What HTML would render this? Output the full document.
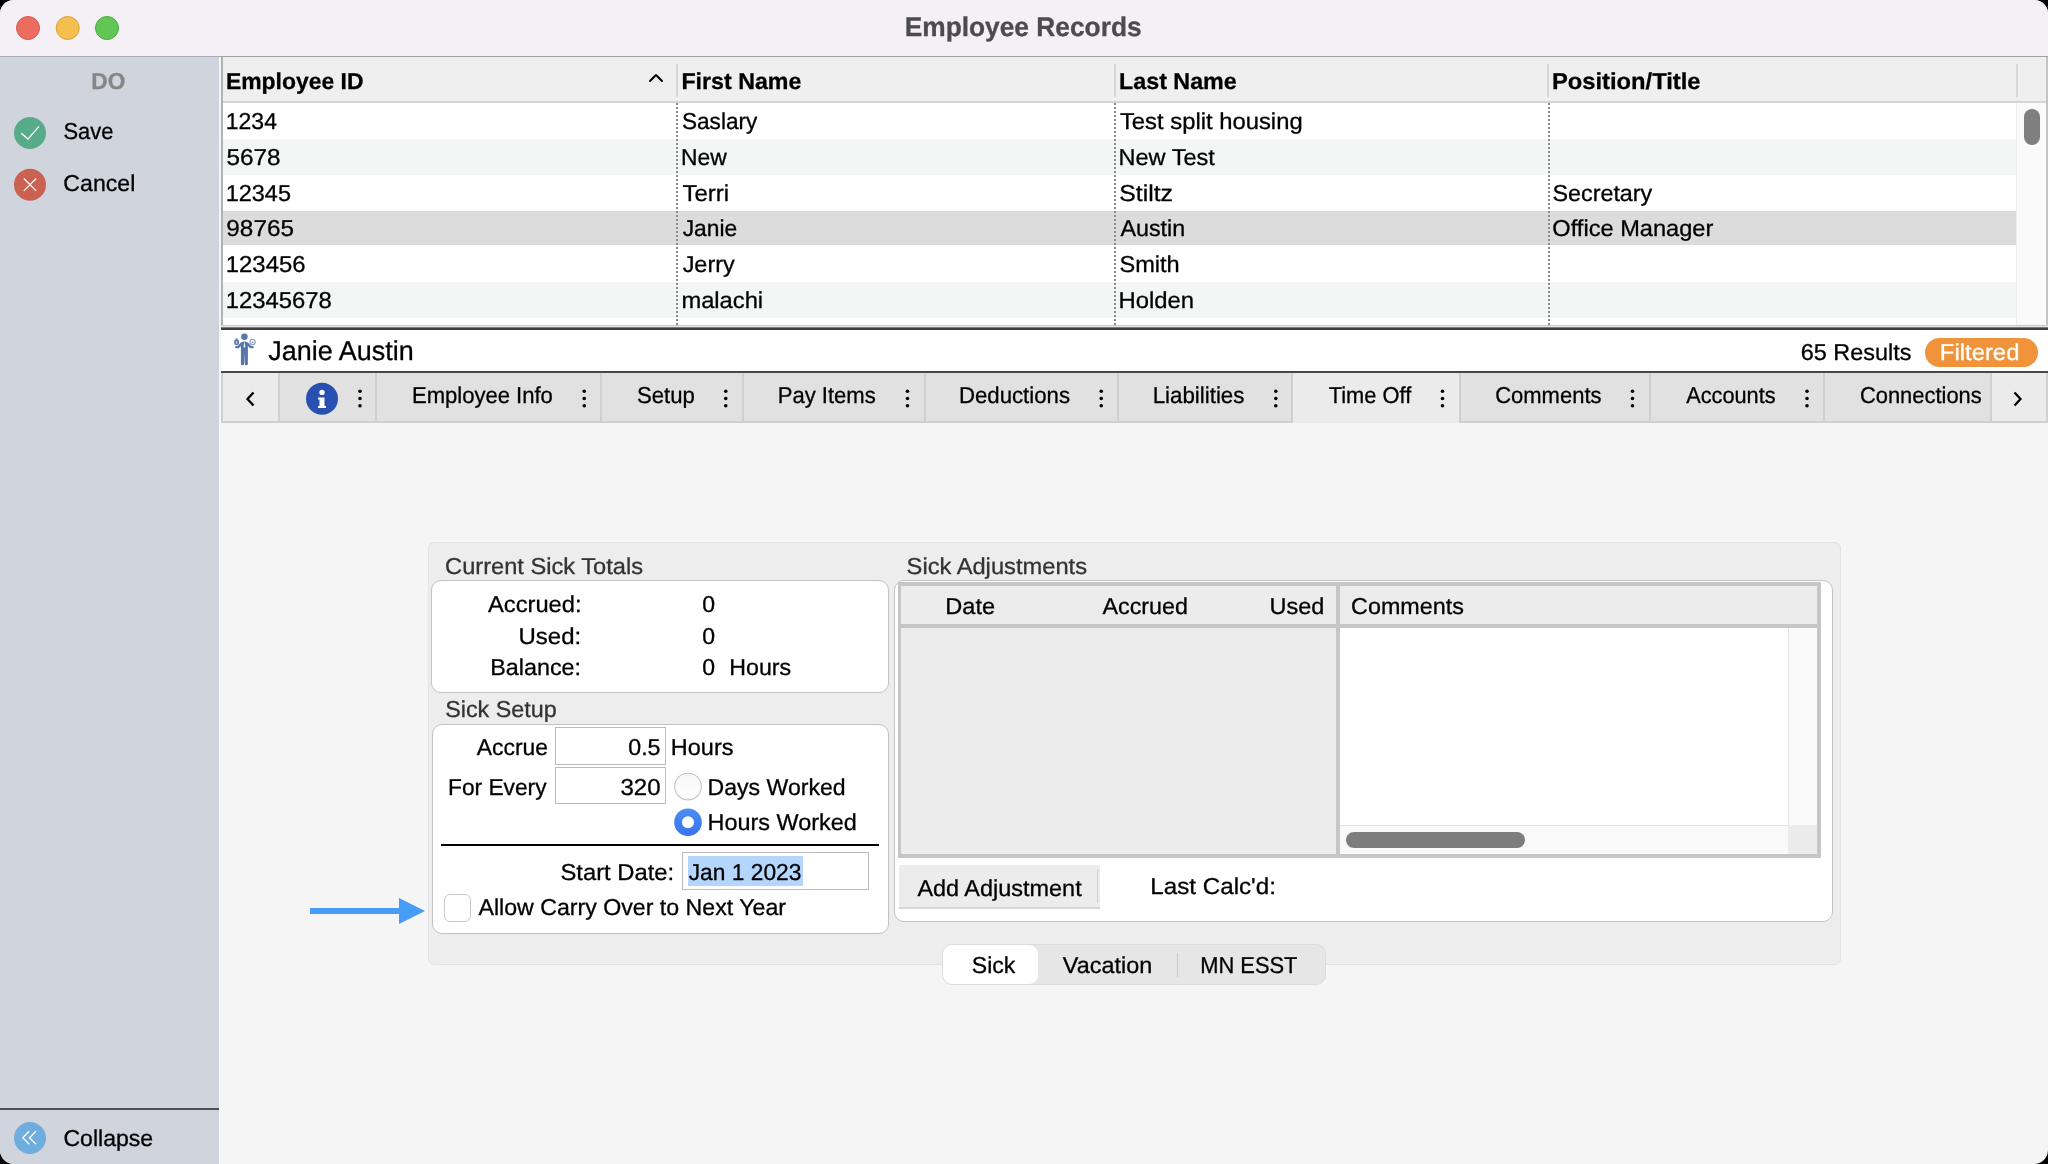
<!DOCTYPE html><html><head><meta charset="utf-8"><style>
html,body{margin:0;padding:0;width:2048px;height:1164px;overflow:hidden;background:#000}
#w{position:absolute;left:0;top:0;width:2048px;height:1164px;overflow:hidden;border-radius:14px;background:#f5f5f5}
#w div{position:absolute;box-sizing:border-box}
svg{position:absolute;left:0;top:0;will-change:transform;text-rendering:geometricPrecision}
text{font-family:"Liberation Sans",sans-serif;white-space:pre}
</style></head><body><div id="w">

<div style="left:0px;top:0px;width:2048px;height:56px;background:#f4f0f6"></div>
<div style="left:0px;top:56px;width:219px;height:1px;background:#a6adb8"></div>
<div style="left:219px;top:56px;width:1829px;height:1px;background:#a2a2a2"></div>
<div style="left:0px;top:57px;width:219px;height:1px;background:#c3c8d1"></div>
<div style="left:0px;top:57px;width:219px;height:1107px;background:#d0d4dc"></div>
<div style="left:219px;top:57px;width:2px;height:1107px;background:#f5f5f5"></div>
<div style="left:0px;top:1108px;width:219px;height:2px;background:#4f4f4f"></div>
<div style="left:221px;top:57px;width:2px;height:270px;background:#b2b2b2"></div>
<div style="left:223px;top:57px;width:1825px;height:44px;background:#efefef"></div>
<div style="left:223px;top:101px;width:1825px;height:2px;background:#d4d4d4"></div>
<div style="left:676px;top:64px;width:2px;height:33px;background:#d7d7d7"></div>
<div style="left:1113.5px;top:64px;width:2.0px;height:33px;background:#d7d7d7"></div>
<div style="left:1547px;top:64px;width:2px;height:33px;background:#d7d7d7"></div>
<div style="left:2016px;top:64px;width:2px;height:33px;background:#d7d7d7"></div>
<div style="left:223px;top:103px;width:1793px;height:36px;background:#ffffff"></div>
<div style="left:223px;top:139px;width:1793px;height:36px;background:#f4f5f5"></div>
<div style="left:223px;top:175px;width:1793px;height:36px;background:#ffffff"></div>
<div style="left:223px;top:211px;width:1793px;height:33.5px;background:#dcdcdc"></div>
<div style="left:223px;top:244.5px;width:1793px;height:37.5px;background:#ffffff"></div>
<div style="left:223px;top:282px;width:1793px;height:36px;background:#f4f5f5"></div>
<div style="left:223px;top:318px;width:1793px;height:9px;background:#ffffff"></div>
<div style="left:2016px;top:103px;width:30px;height:224px;background:#fafafa;border-left:1px solid #ebebeb"></div>
<div style="left:2023.5px;top:109px;width:16.5px;height:35.5px;background:#7f7f7f;border-radius:9px"></div>
<div style="left:2046px;top:57px;width:2px;height:270px;background:#c4c4c4"></div>
<div style="left:676px;top:103px;width:2px;height:222px;background:repeating-linear-gradient(to bottom,#8a8a8a 0,#8a8a8a 2px,transparent 2px,transparent 4px)"></div>
<div style="left:1113.5px;top:103px;width:2.0px;height:222px;background:repeating-linear-gradient(to bottom,#8a8a8a 0,#8a8a8a 2px,transparent 2px,transparent 4px)"></div>
<div style="left:1547.5px;top:103px;width:2.0px;height:222px;background:repeating-linear-gradient(to bottom,#8a8a8a 0,#8a8a8a 2px,transparent 2px,transparent 4px)"></div>
<div style="left:221px;top:325px;width:1827px;height:1px;background:#c8c8c8"></div>
<div style="left:221px;top:326px;width:1827px;height:1px;background:#e8e8e8"></div>
<div style="left:221px;top:327px;width:1827px;height:1px;background:#7a7a7a"></div>
<div style="left:221px;top:328px;width:1827px;height:2px;background:#404040"></div>
<div style="left:221px;top:330px;width:1827px;height:41px;background:#ffffff"></div>
<div style="left:1924.7px;top:338px;width:113.29999999999995px;height:29.19999999999999px;background:#f0933a;border-radius:15px"></div>
<div style="left:221px;top:371px;width:1827px;height:2px;background:#474747"></div>
<div style="left:221px;top:373px;width:1827px;height:50px;background:#e1e1e1;border-top:0;border-bottom:2px solid #cfcfcf"></div>
<div style="left:221px;top:373px;width:2px;height:50px;background:#cfcfcf"></div>
<div style="left:223px;top:373px;width:55px;height:48px;background:#ebebeb"></div>
<div style="left:1292px;top:373px;width:166.5px;height:50px;background:#ebebeb"></div>
<div style="left:1991px;top:373px;width:55px;height:48px;background:#ebebeb"></div>
<div style="left:278px;top:373px;width:2px;height:48px;background:#d0d0d0"></div>
<div style="left:374.5px;top:373px;width:2.0px;height:48px;background:#d0d0d0"></div>
<div style="left:599.5px;top:373px;width:2.0px;height:48px;background:#d0d0d0"></div>
<div style="left:741.5px;top:373px;width:2.0px;height:48px;background:#d0d0d0"></div>
<div style="left:923.5px;top:373px;width:2.0px;height:48px;background:#d0d0d0"></div>
<div style="left:1116.5px;top:373px;width:2.0px;height:48px;background:#d0d0d0"></div>
<div style="left:1290.5px;top:373px;width:2.0px;height:50px;background:#d0d0d0"></div>
<div style="left:1458.5px;top:373px;width:2.0px;height:50px;background:#d0d0d0"></div>
<div style="left:1648.5px;top:373px;width:2.0px;height:48px;background:#d0d0d0"></div>
<div style="left:1822.5px;top:373px;width:2.0px;height:48px;background:#d0d0d0"></div>
<div style="left:1989.5px;top:373px;width:2.0px;height:48px;background:#d0d0d0"></div>
<div style="left:2046px;top:373px;width:2px;height:48px;background:#d0d0d0"></div>
<div style="left:427.5px;top:542px;width:1413.0px;height:422.5px;background:#ededed;border:1px solid #e3e3e3;border-radius:6px"></div>
<div style="left:431px;top:580px;width:458px;height:113px;background:#fff;border:1.5px solid #c3c3c3;border-radius:10px"></div>
<div style="left:432px;top:723.5px;width:457px;height:210.0px;background:#fff;border:1.5px solid #c3c3c3;border-radius:10px"></div>
<div style="left:893.5px;top:580px;width:939.5px;height:341.5px;background:#fff;border:1.5px solid #c3c3c3;border-radius:10px"></div>
<div style="left:555px;top:727px;width:111px;height:37.5px;background:#fff;border:1.5px solid #bcbcbc"></div>
<div style="left:555px;top:767px;width:111px;height:37px;background:#fff;border:1.5px solid #bcbcbc"></div>
<div style="left:682px;top:852px;width:187px;height:38px;background:#fff;border:1.5px solid #bcbcbc"></div>
<div style="left:688px;top:856px;width:115px;height:29.5px;background:#b4d6fd"></div>
<div style="left:441px;top:844px;width:438px;height:2px;background:#000"></div>
<div style="left:443.7px;top:894.3px;width:27.30000000000001px;height:27.40000000000009px;background:#fff;border:1.2px solid #c9c9c9;border-radius:6px"></div>
<div style="left:310px;top:908px;width:90px;height:6px;background:#479cf6"></div>
<div style="left:897.5px;top:582px;width:923.5px;height:275.5px;background:#c6c6c6"></div>
<div style="left:901px;top:585.5px;width:916px;height:38.5px;background:#ececec"></div>
<div style="left:901px;top:628px;width:435px;height:226px;background:#ececec"></div>
<div style="left:1340px;top:628px;width:477px;height:226px;background:#ffffff"></div>
<div style="left:1336px;top:585.5px;width:4px;height:268.5px;background:#c6c6c6"></div>
<div style="left:1788px;top:628px;width:29px;height:197px;background:#fafafa;border-left:1.5px solid #e3e3e3"></div>
<div style="left:1340px;top:825px;width:448px;height:29px;background:#f9f9f9;border-top:1px solid #e3e3e3"></div>
<div style="left:1788px;top:825px;width:29px;height:29px;background:#ebebeb"></div>
<div style="left:1346.3px;top:832px;width:178.70000000000005px;height:16px;background:#7d7d7d;border-radius:8px"></div>
<div style="left:899px;top:864.5px;width:201px;height:44.5px;background:#ececec;border-bottom:2px solid #d6d6d6"></div>
<div style="left:1096.5px;top:870px;width:1.5px;height:33px;background:#d2d2d2"></div>
<div style="left:942px;top:944px;width:384px;height:41px;background:#e6e6e6;border:1px solid #dcdcdc;border-radius:10px"></div>
<div style="left:943px;top:945px;width:95px;height:39px;background:#ffffff;border-radius:9px"></div>
<div style="left:1176.5px;top:953px;width:1.5px;height:24px;background:#c9c9c9"></div>
<svg width="2048" height="1164" viewBox="0 0 2048 1164">
<circle cx="28" cy="28" r="11.5" fill="#ee6b5f" stroke="#d65a4d" stroke-width="1"/>
<circle cx="67.7" cy="28" r="11.5" fill="#f4bf4f" stroke="#d9a23a" stroke-width="1"/>
<circle cx="107" cy="28" r="11.5" fill="#62c655" stroke="#4ca83e" stroke-width="1"/>
<circle cx="30" cy="133" r="16" fill="#58ab8a"/>
<polyline points="21.2,133.2 28,139 39,126.3" fill="none" stroke="#fff" stroke-width="1.25"/>
<circle cx="30" cy="184.7" r="16" fill="#cb6150"/>
<path d="M23.8 178.5 L36.2 190.9 M36.2 178.5 L23.8 190.9" stroke="#fff" stroke-width="1.25"/>
<circle cx="30" cy="1138" r="16" fill="#6fadde"/>
<path d="M29.3 1131.2 L22.8 1137.7 L29.3 1144.2 M36 1131.2 L29.5 1137.7 L36 1144.2" fill="none" stroke="#fff" stroke-width="1.3"/>
<polyline points="650,81 656,75 662,81" fill="none" stroke="#000" stroke-width="2" stroke-linecap="round" stroke-linejoin="round"/>
<g fill="#5877a9"><circle cx="244.4" cy="336.8" r="3.25"/><path d="M240.8 342.6 Q244.4 340.4 248 342.6 L251.2 346.1 L253.2 346.1 Q254.4 347.1 253.2 348.3 L250.4 348.3 L247.9 346.3 L247.9 364 Q247.9 365.2 246.7 365.2 L245.8 365.2 Q244.8 365.2 244.7 364 L244.4 352.5 L244.1 364 Q244 365.2 243 365.2 L242.1 365.2 Q240.9 365.2 240.9 364 L240.9 346.3 L238.4 348.3 L235.6 348.3 Q234.4 347.1 235.6 346.1 L237.6 346.1 Z"/><ellipse cx="236.6" cy="342.2" rx="2.5" ry="2.9"/><path d="M235.2 338.4 L238 338.4 L237.2 339.8 L236 339.8 Z"/><ellipse cx="236.6" cy="342.3" rx="0.8" ry="1.6" fill="#b9c6dd"/><circle cx="252.6" cy="341.9" r="2.6" fill="none" stroke="#8499c0" stroke-width="1.1"/><circle cx="252.6" cy="342.2" r="0.9" fill="#8499c0"/></g><path d="M244.4 341.3 L243.6 346.5 L244.4 347.8 L245.2 346.5 Z" fill="#fff"/>
<polyline points="253.5,392.5 247.5,399 253.5,405.5" fill="none" stroke="#000" stroke-width="2.3"/>
<polyline points="2014.5,392.5 2020.5,399 2014.5,405.5" fill="none" stroke="#000" stroke-width="2.3"/>
<circle cx="322" cy="398.8" r="16" fill="#2850b0"/><circle cx="322" cy="392.4" r="2.7" fill="#fff"/><path d="M318 397.5 L324.5 397.5 L324.5 406 L326 406 L326 408 L318 408 L318 406 L319.5 406 L319.5 399.5 L318 399.5 Z" fill="#fff"/>
<circle cx="360" cy="391.3" r="1.8" fill="#000"/>
<circle cx="360" cy="398.5" r="1.8" fill="#000"/>
<circle cx="360" cy="405.7" r="1.8" fill="#000"/>
<circle cx="584.25" cy="391.3" r="1.8" fill="#000"/>
<circle cx="584.25" cy="398.5" r="1.8" fill="#000"/>
<circle cx="584.25" cy="405.7" r="1.8" fill="#000"/>
<circle cx="725.75" cy="391.3" r="1.8" fill="#000"/>
<circle cx="725.75" cy="398.5" r="1.8" fill="#000"/>
<circle cx="725.75" cy="405.7" r="1.8" fill="#000"/>
<circle cx="907.5" cy="391.3" r="1.8" fill="#000"/>
<circle cx="907.5" cy="398.5" r="1.8" fill="#000"/>
<circle cx="907.5" cy="405.7" r="1.8" fill="#000"/>
<circle cx="1101.25" cy="391.3" r="1.8" fill="#000"/>
<circle cx="1101.25" cy="398.5" r="1.8" fill="#000"/>
<circle cx="1101.25" cy="405.7" r="1.8" fill="#000"/>
<circle cx="1275.8" cy="391.3" r="1.8" fill="#000"/>
<circle cx="1275.8" cy="398.5" r="1.8" fill="#000"/>
<circle cx="1275.8" cy="405.7" r="1.8" fill="#000"/>
<circle cx="1442.5" cy="391.3" r="1.8" fill="#000"/>
<circle cx="1442.5" cy="398.5" r="1.8" fill="#000"/>
<circle cx="1442.5" cy="405.7" r="1.8" fill="#000"/>
<circle cx="1632.5" cy="391.3" r="1.8" fill="#000"/>
<circle cx="1632.5" cy="398.5" r="1.8" fill="#000"/>
<circle cx="1632.5" cy="405.7" r="1.8" fill="#000"/>
<circle cx="1807" cy="391.3" r="1.8" fill="#000"/>
<circle cx="1807" cy="398.5" r="1.8" fill="#000"/>
<circle cx="1807" cy="405.7" r="1.8" fill="#000"/>
<defs><linearGradient id="rg" x1="0" y1="0" x2="0" y2="1"><stop offset="0" stop-color="#4a8ef2"/><stop offset="1" stop-color="#3a73ef"/></linearGradient><linearGradient id="ug" x1="0" y1="0" x2="0" y2="1"><stop offset="0" stop-color="#f7f7f7"/><stop offset="1" stop-color="#ffffff"/></linearGradient></defs>
<circle cx="688" cy="786.6" r="13.3" fill="url(#ug)" stroke="#c4c4c4" stroke-width="1.1"/>
<circle cx="688" cy="822.2" r="13.8" fill="url(#rg)"/><circle cx="688" cy="822.2" r="6" fill="#fff"/>
<polygon points="399,898 425,911 399,924" fill="#479cf6"/>
<text x="904.72" y="36.00" font-size="26.9" font-weight="bold" fill="#4c4b50" stroke="#4c4b50" stroke-width="0.3" textLength="236.86" lengthAdjust="spacingAndGlyphs">Employee Records</text>
<text x="91.27" y="89.00" font-size="23" font-weight="bold" fill="#868686" stroke="#868686" stroke-width="0.3" textLength="33.99" lengthAdjust="spacingAndGlyphs">DO</text>
<text x="63.51" y="138.75" font-size="23" font-weight="normal" fill="#000" stroke="#000" stroke-width="0.3" textLength="49.96" lengthAdjust="spacingAndGlyphs">Save</text>
<text x="63.34" y="191.25" font-size="23" font-weight="normal" fill="#000" stroke="#000" stroke-width="0.3" textLength="71.98" lengthAdjust="spacingAndGlyphs">Cancel</text>
<text x="63.45" y="1145.80" font-size="23" font-weight="normal" fill="#000" stroke="#000" stroke-width="0.3" textLength="89.76" lengthAdjust="spacingAndGlyphs">Collapse</text>
<text x="225.95" y="89.20" font-size="23" font-weight="bold" fill="#000" stroke="#000" stroke-width="0.3" textLength="137.51" lengthAdjust="spacingAndGlyphs">Employee ID</text>
<text x="681.43" y="89.20" font-size="23" font-weight="bold" fill="#000" stroke="#000" stroke-width="0.3" textLength="119.95" lengthAdjust="spacingAndGlyphs">First Name</text>
<text x="1119.03" y="89.20" font-size="23" font-weight="bold" fill="#000" stroke="#000" stroke-width="0.3" textLength="117.73" lengthAdjust="spacingAndGlyphs">Last Name</text>
<text x="1551.90" y="89.20" font-size="23" font-weight="bold" fill="#000" stroke="#000" stroke-width="0.3" textLength="148.62" lengthAdjust="spacingAndGlyphs">Position/Title</text>
<text x="225.78" y="129.00" font-size="23" font-weight="normal" fill="#000" stroke="#000" stroke-width="0.3" textLength="51.16" lengthAdjust="spacingAndGlyphs">1234</text>
<text x="681.98" y="129.00" font-size="23" font-weight="normal" fill="#000" stroke="#000" stroke-width="0.3" textLength="75.36" lengthAdjust="spacingAndGlyphs">Saslary</text>
<text x="1119.96" y="129.00" font-size="23" font-weight="normal" fill="#000" stroke="#000" stroke-width="0.3" textLength="182.70" lengthAdjust="spacingAndGlyphs">Test split housing</text>
<text x="226.53" y="164.70" font-size="23" font-weight="normal" fill="#000" stroke="#000" stroke-width="0.3" textLength="54.06" lengthAdjust="spacingAndGlyphs">5678</text>
<text x="681.11" y="164.70" font-size="23" font-weight="normal" fill="#000" stroke="#000" stroke-width="0.3" textLength="45.74" lengthAdjust="spacingAndGlyphs">New</text>
<text x="1118.56" y="164.70" font-size="23" font-weight="normal" fill="#000" stroke="#000" stroke-width="0.3" textLength="96.25" lengthAdjust="spacingAndGlyphs">New Test</text>
<text x="225.74" y="200.60" font-size="23" font-weight="normal" fill="#000" stroke="#000" stroke-width="0.3" textLength="65.22" lengthAdjust="spacingAndGlyphs">12345</text>
<text x="682.46" y="200.60" font-size="23" font-weight="normal" fill="#000" stroke="#000" stroke-width="0.3" textLength="46.64" lengthAdjust="spacingAndGlyphs">Terri</text>
<text x="1119.39" y="200.60" font-size="23" font-weight="normal" fill="#000" stroke="#000" stroke-width="0.3" textLength="53.54" lengthAdjust="spacingAndGlyphs">Stiltz</text>
<text x="226.34" y="236.30" font-size="23" font-weight="normal" fill="#000" stroke="#000" stroke-width="0.3" textLength="67.65" lengthAdjust="spacingAndGlyphs">98765</text>
<text x="682.66" y="236.30" font-size="23" font-weight="normal" fill="#000" stroke="#000" stroke-width="0.3" textLength="54.58" lengthAdjust="spacingAndGlyphs">Janie</text>
<text x="1120.44" y="236.30" font-size="23" font-weight="normal" fill="#000" stroke="#000" stroke-width="0.3" textLength="64.76" lengthAdjust="spacingAndGlyphs">Austin</text>
<text x="225.71" y="272.10" font-size="23" font-weight="normal" fill="#000" stroke="#000" stroke-width="0.3" textLength="79.86" lengthAdjust="spacingAndGlyphs">123456</text>
<text x="682.65" y="272.10" font-size="23" font-weight="normal" fill="#000" stroke="#000" stroke-width="0.3" textLength="52.15" lengthAdjust="spacingAndGlyphs">Jerry</text>
<text x="1119.44" y="272.10" font-size="23" font-weight="normal" fill="#000" stroke="#000" stroke-width="0.3" textLength="60.26" lengthAdjust="spacingAndGlyphs">Smith</text>
<text x="225.71" y="307.70" font-size="23" font-weight="normal" fill="#000" stroke="#000" stroke-width="0.3" textLength="106.10" lengthAdjust="spacingAndGlyphs">12345678</text>
<text x="681.40" y="307.70" font-size="23" font-weight="normal" fill="#000" stroke="#000" stroke-width="0.3" textLength="81.72" lengthAdjust="spacingAndGlyphs">malachi</text>
<text x="1118.53" y="307.70" font-size="23" font-weight="normal" fill="#000" stroke="#000" stroke-width="0.3" textLength="75.60" lengthAdjust="spacingAndGlyphs">Holden</text>
<text x="1552.45" y="200.60" font-size="23" font-weight="normal" fill="#000" stroke="#000" stroke-width="0.3" textLength="99.84" lengthAdjust="spacingAndGlyphs">Secretary</text>
<text x="1552.38" y="236.30" font-size="23" font-weight="normal" fill="#000" stroke="#000" stroke-width="0.3" textLength="161.00" lengthAdjust="spacingAndGlyphs">Office Manager</text>
<text x="268.35" y="360.00" font-size="27.3" font-weight="normal" fill="#000" stroke="#000" stroke-width="0.3" textLength="145.35" lengthAdjust="spacingAndGlyphs">Janie Austin</text>
<text x="1800.83" y="359.80" font-size="23" font-weight="normal" fill="#000" stroke="#000" stroke-width="0.3" textLength="110.58" lengthAdjust="spacingAndGlyphs">65 Results</text>
<text x="1939.83" y="359.80" font-size="23" font-weight="normal" fill="#ffffff" stroke="#ffffff" stroke-width="0.3" textLength="79.61" lengthAdjust="spacingAndGlyphs">Filtered</text>
<text x="411.93" y="403.00" font-size="23" font-weight="normal" fill="#000" stroke="#000" stroke-width="0.3" textLength="140.96" lengthAdjust="spacingAndGlyphs">Employee Info</text>
<text x="637.00" y="403.00" font-size="23" font-weight="normal" fill="#000" stroke="#000" stroke-width="0.3" textLength="57.90" lengthAdjust="spacingAndGlyphs">Setup</text>
<text x="777.68" y="403.00" font-size="23" font-weight="normal" fill="#000" stroke="#000" stroke-width="0.3" textLength="98.11" lengthAdjust="spacingAndGlyphs">Pay Items</text>
<text x="958.92" y="403.00" font-size="23" font-weight="normal" fill="#000" stroke="#000" stroke-width="0.3" textLength="111.12" lengthAdjust="spacingAndGlyphs">Deductions</text>
<text x="1152.66" y="403.00" font-size="23" font-weight="normal" fill="#000" stroke="#000" stroke-width="0.3" textLength="91.74" lengthAdjust="spacingAndGlyphs">Liabilities</text>
<text x="1328.76" y="403.00" font-size="23" font-weight="normal" fill="#000" stroke="#000" stroke-width="0.3" textLength="82.46" lengthAdjust="spacingAndGlyphs">Time Off</text>
<text x="1495.15" y="403.00" font-size="23" font-weight="normal" fill="#000" stroke="#000" stroke-width="0.3" textLength="106.36" lengthAdjust="spacingAndGlyphs">Comments</text>
<text x="1686.25" y="403.00" font-size="23" font-weight="normal" fill="#000" stroke="#000" stroke-width="0.3" textLength="89.33" lengthAdjust="spacingAndGlyphs">Accounts</text>
<text x="1859.90" y="403.00" font-size="23" font-weight="normal" fill="#000" stroke="#000" stroke-width="0.3" textLength="121.85" lengthAdjust="spacingAndGlyphs">Connections</text>
<text x="445.07" y="573.80" font-size="23" font-weight="normal" fill="#333333" stroke="#333333" stroke-width="0.3" textLength="197.98" lengthAdjust="spacingAndGlyphs">Current Sick Totals</text>
<text x="906.63" y="574.00" font-size="23" font-weight="normal" fill="#333333" stroke="#333333" stroke-width="0.3" textLength="180.38" lengthAdjust="spacingAndGlyphs">Sick Adjustments</text>
<text x="445.15" y="716.90" font-size="23" font-weight="normal" fill="#333333" stroke="#333333" stroke-width="0.3" textLength="111.49" lengthAdjust="spacingAndGlyphs">Sick Setup</text>
<text x="487.94" y="611.60" font-size="23" font-weight="normal" fill="#000" stroke="#000" stroke-width="0.3" textLength="93.63" lengthAdjust="spacingAndGlyphs">Accrued:</text>
<text x="518.44" y="643.70" font-size="23" font-weight="normal" fill="#000" stroke="#000" stroke-width="0.3" textLength="62.72" lengthAdjust="spacingAndGlyphs">Used:</text>
<text x="490.27" y="674.80" font-size="23" font-weight="normal" fill="#000" stroke="#000" stroke-width="0.3" textLength="90.81" lengthAdjust="spacingAndGlyphs">Balance:</text>
<text x="702.18" y="611.60" font-size="23" font-weight="normal" fill="#000" stroke="#000" stroke-width="0.3" textLength="12.81" lengthAdjust="spacingAndGlyphs">0</text>
<text x="702.18" y="643.70" font-size="23" font-weight="normal" fill="#000" stroke="#000" stroke-width="0.3" textLength="12.81" lengthAdjust="spacingAndGlyphs">0</text>
<text x="702.18" y="674.80" font-size="23" font-weight="normal" fill="#000" stroke="#000" stroke-width="0.3" textLength="12.81" lengthAdjust="spacingAndGlyphs">0</text>
<text x="729.29" y="674.80" font-size="23" font-weight="normal" fill="#000" stroke="#000" stroke-width="0.3" textLength="61.82" lengthAdjust="spacingAndGlyphs">Hours</text>
<text x="476.74" y="755.30" font-size="23" font-weight="normal" fill="#000" stroke="#000" stroke-width="0.3" textLength="71.28" lengthAdjust="spacingAndGlyphs">Accrue</text>
<text x="628.27" y="755.30" font-size="23" font-weight="normal" fill="#000" stroke="#000" stroke-width="0.3" textLength="32.26" lengthAdjust="spacingAndGlyphs">0.5</text>
<text x="670.87" y="755.30" font-size="23" font-weight="normal" fill="#000" stroke="#000" stroke-width="0.3" textLength="62.56" lengthAdjust="spacingAndGlyphs">Hours</text>
<text x="448.02" y="794.60" font-size="23" font-weight="normal" fill="#000" stroke="#000" stroke-width="0.3" textLength="98.51" lengthAdjust="spacingAndGlyphs">For Every</text>
<text x="620.40" y="794.60" font-size="23" font-weight="normal" fill="#000" stroke="#000" stroke-width="0.3" textLength="40.13" lengthAdjust="spacingAndGlyphs">320</text>
<text x="707.60" y="794.60" font-size="23" font-weight="normal" fill="#000" stroke="#000" stroke-width="0.3" textLength="137.97" lengthAdjust="spacingAndGlyphs">Days Worked</text>
<text x="707.57" y="830.00" font-size="23" font-weight="normal" fill="#000" stroke="#000" stroke-width="0.3" textLength="149.20" lengthAdjust="spacingAndGlyphs">Hours Worked</text>
<text x="560.43" y="879.80" font-size="23" font-weight="normal" fill="#000" stroke="#000" stroke-width="0.3" textLength="113.71" lengthAdjust="spacingAndGlyphs">Start Date:</text>
<text x="688.66" y="879.80" font-size="23" font-weight="normal" fill="#000" stroke="#000" stroke-width="0.3" textLength="112.74" lengthAdjust="spacingAndGlyphs">Jan 1 2023</text>
<text x="478.44" y="915.40" font-size="23" font-weight="normal" fill="#000" stroke="#000" stroke-width="0.3" textLength="307.62" lengthAdjust="spacingAndGlyphs">Allow Carry Over to Next Year</text>
<text x="945.35" y="613.80" font-size="23" font-weight="normal" fill="#000" stroke="#000" stroke-width="0.3" textLength="49.80" lengthAdjust="spacingAndGlyphs">Date</text>
<text x="1102.54" y="613.80" font-size="23" font-weight="normal" fill="#000" stroke="#000" stroke-width="0.3" textLength="85.44" lengthAdjust="spacingAndGlyphs">Accrued</text>
<text x="1269.58" y="613.80" font-size="23" font-weight="normal" fill="#000" stroke="#000" stroke-width="0.3" textLength="54.84" lengthAdjust="spacingAndGlyphs">Used</text>
<text x="1351.13" y="613.80" font-size="23" font-weight="normal" fill="#000" stroke="#000" stroke-width="0.3" textLength="112.77" lengthAdjust="spacingAndGlyphs">Comments</text>
<text x="917.44" y="896.00" font-size="23" font-weight="normal" fill="#000" stroke="#000" stroke-width="0.3" textLength="164.23" lengthAdjust="spacingAndGlyphs">Add Adjustment</text>
<text x="1150.30" y="893.70" font-size="23" font-weight="normal" fill="#000" stroke="#000" stroke-width="0.3" textLength="125.60" lengthAdjust="spacingAndGlyphs">Last Calc&#x27;d:</text>
<text x="971.86" y="972.70" font-size="23" font-weight="normal" fill="#000" stroke="#000" stroke-width="0.3" textLength="43.52" lengthAdjust="spacingAndGlyphs">Sick</text>
<text x="1062.88" y="972.70" font-size="23" font-weight="normal" fill="#000" stroke="#000" stroke-width="0.3" textLength="89.28" lengthAdjust="spacingAndGlyphs">Vacation</text>
<text x="1200.19" y="972.70" font-size="23" font-weight="normal" fill="#000" stroke="#000" stroke-width="0.3" textLength="97.30" lengthAdjust="spacingAndGlyphs">MN ESST</text>
</svg>
</div></body></html>
